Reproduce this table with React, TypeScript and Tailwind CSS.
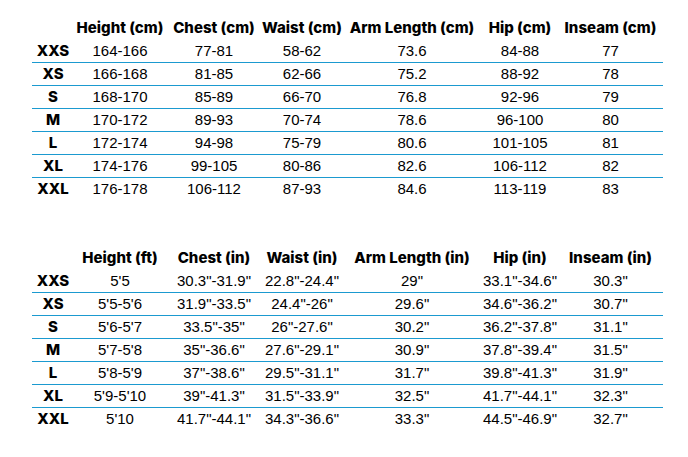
const metric = {
  headers: ['Height (cm)', 'Chest (cm)', 'Waist (cm)', 'Arm Length (cm)', 'Hip (cm)', 'Inseam (cm)'],
  rows: [
    ['XXS', '164-166', '77-81', '58-62', '73.6', '84-88', '77'],
    ['XS', '166-168', '81-85', '62-66', '75.2', '88-92', '78'],
    ['S', '168-170', '85-89', '66-70', '76.8', '92-96', '79'],
    ['M', '170-172', '89-93', '70-74', '78.6', '96-100', '80'],
    ['L', '172-174', '94-98', '75-79', '80.6', '101-105', '81'],
    ['XL', '174-176', '99-105', '80-86', '82.6', '106-112', '82'],
    ['XXL', '176-178', '106-112', '87-93', '84.6', '113-119', '83'],
  ],
};

const imperial = {
  headers: ['Height (ft)', 'Chest (in)', 'Waist (in)', 'Arm Length (in)', 'Hip (in)', 'Inseam (in)'],
  rows: [
    ['XXS', "5'5", '30.3"-31.9"', '22.8"-24.4"', '29"', '33.1"-34.6"', '30.3"'],
    ['XS', "5'5-5'6", '31.9"-33.5"', '24.4"-26"', '29.6"', '34.6"-36.2"', '30.7"'],
    ['S', "5'6-5'7", '33.5"-35"', '26"-27.6"', '30.2"', '36.2"-37.8"', '31.1"'],
    ['M', "5'7-5'8", '35"-36.6"', '27.6"-29.1"', '30.9"', '37.8"-39.4"', '31.5"'],
    ['L', "5'8-5'9", '37"-38.6"', '29.5"-31.1"', '31.7"', '39.8"-41.3"', '31.9"'],
    ['XL', "5'9-5'10", '39"-41.3"', '31.5"-33.9"', '32.5"', '41.7"-44.1"', '32.3"'],
    ['XXL', "5'10", '41.7"-44.1"', '34.3"-36.6"', '33.3"', '44.5"-46.9"', '32.7"'],
  ],
};

const cols = 'grid grid-cols-[42px_92px_96px_80px_140px_76px_105px]';
const bold = "font-['Inter',sans-serif] font-extrabold text-[15px] text-black";

function SizeTable({ headers, rows }: { headers: string[]; rows: string[][] }) {
  return (
    <div className="ml-8 w-[631px]">
      <div className={`${cols} h-[23px] items-center`}>
        <div />
        {headers.map((h) => (
          <div key={h} className={`${bold} whitespace-nowrap text-center`}>
            {h}
          </div>
        ))}
      </div>
      {rows.map((r, i) => (
        <div
          key={r[0]}
          className={`${cols} h-[23px] items-center ${i < rows.length - 1 ? 'border-b border-[#1b9ad0]' : ''}`}
        >
          {r.map((c, j) => (
            <div
              key={j}
              className={
                j === 0
                  ? `${bold} text-center`
                  : "whitespace-nowrap text-center font-['Liberation_Sans',Arial,sans-serif] text-[15px] text-black"
              }
            >
              {c}
            </div>
          ))}
        </div>
      ))}
    </div>
  );
}

export default function App() {
  return (
    <div className="h-[457px] w-[688px] bg-white pt-[17px]">
      <SizeTable {...metric} />
      <div className="h-[46px]" />
      <SizeTable {...imperial} />
    </div>
  );
}
